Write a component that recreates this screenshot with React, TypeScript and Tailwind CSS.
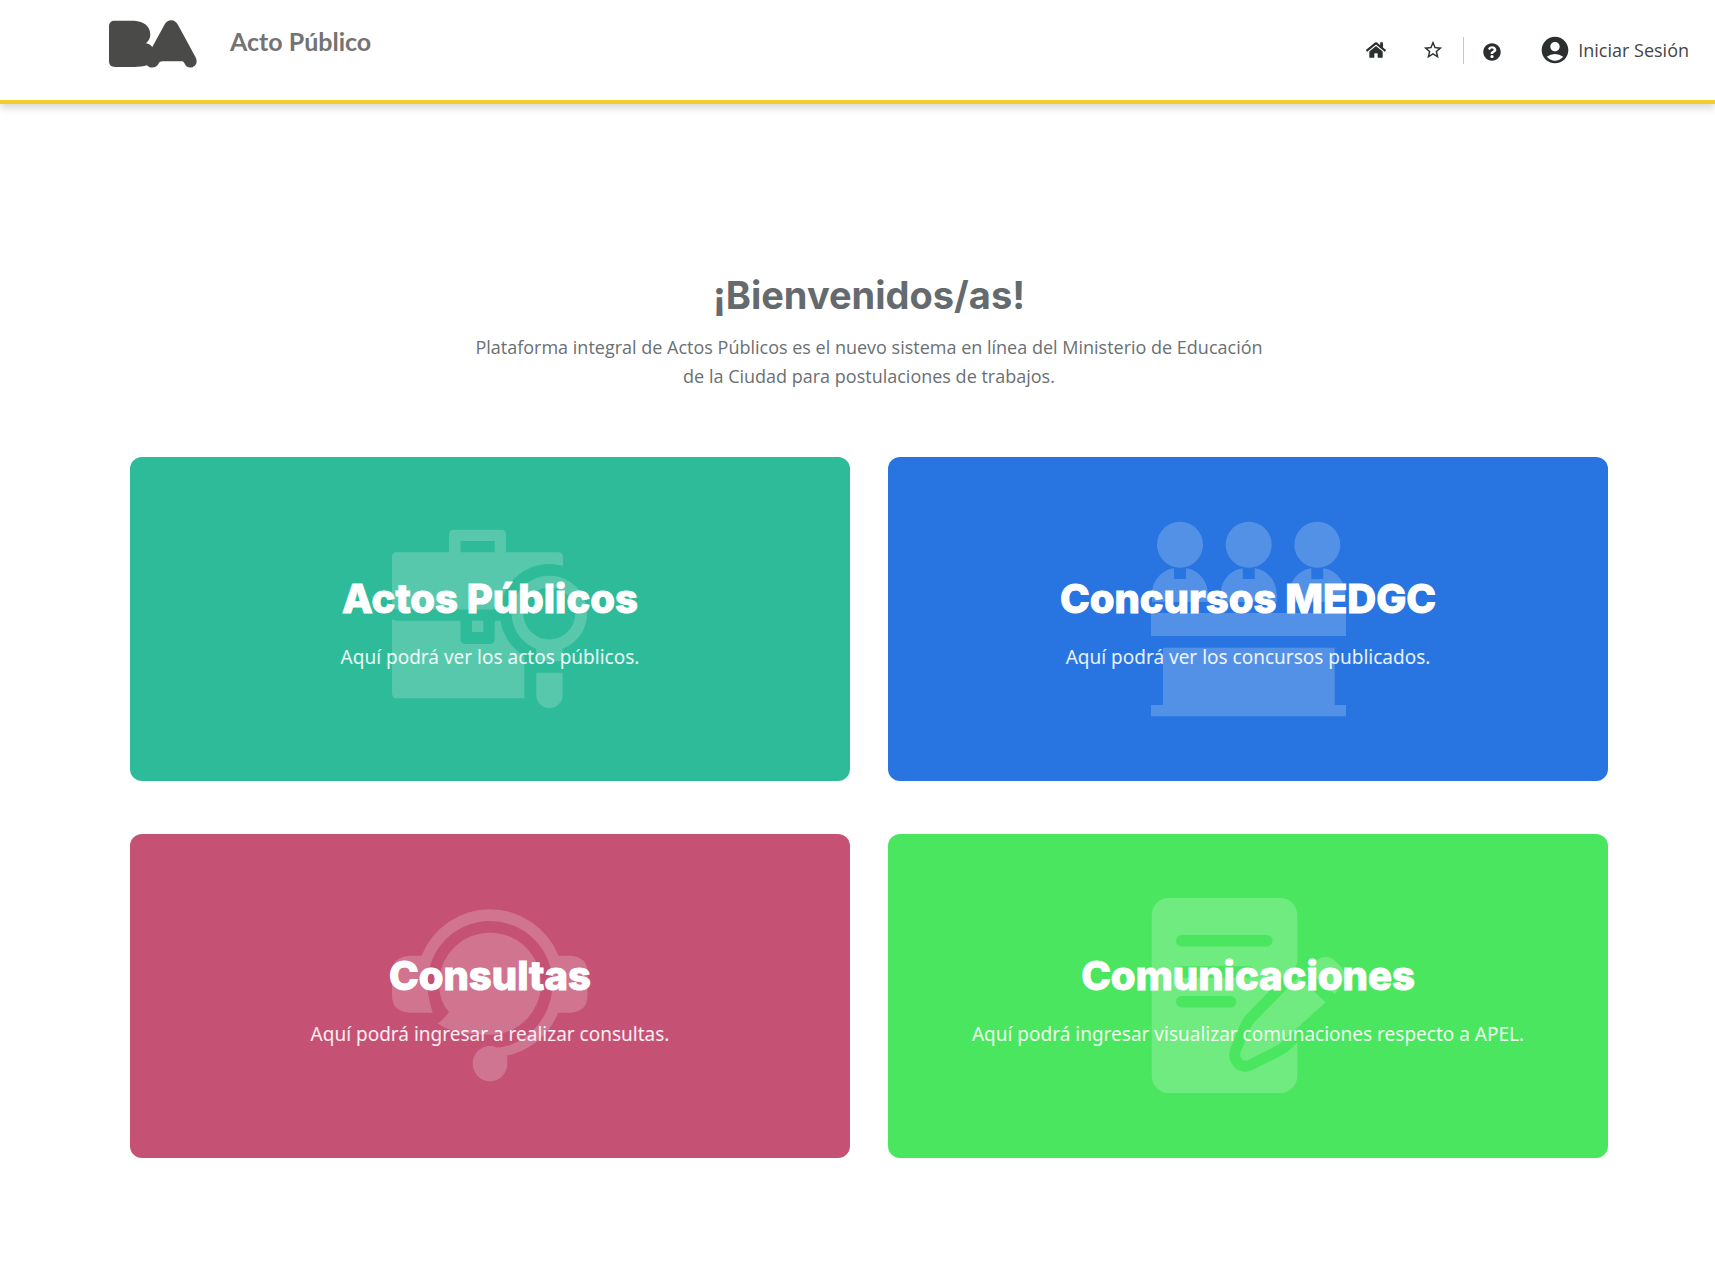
import type { ReactNode } from 'react';
import { FaHome, FaQuestionCircle } from 'react-icons/fa';
import { MdAccountCircle, MdStarBorder } from 'react-icons/md';

function Logo() {
  return (
    <svg viewBox="0 0 88 48" className="h-12 w-22 fill-[#4a4a48]" role="img" aria-label="Buenos Aires">
      <path d="M6 .8H25C35 1.2 41.300 6.500 41.300 14.700C41.300 18 39.500 21 37 23.200C39.700 23.800 42 25 43.300 27L55.200 5.200C58.200-1.200 66-1.300 69.200 5.200L86.700 37.500C89.600 43.500 85.200 47.600 81.300 47.600C78.500 47.600 76.700 46 75.600 43.500C74.800 41.800 74 41.200 72.500 41.200H53.500C51.500 41.200 50.500 42 49.600 43.500C48.300 46.300 46.200 47.600 43.300 47.600C41 47.600 39.300 46.800 38 45.200C34.500 46.300 30 46.900 25 46.900H6C2 46.900 0 45 0 41V6.500C0 2.700 2 .8 6 .8Z" />
    </svg>
  );
}

function BriefcaseSearch() {
  return (
    <>
      <mask id="lens-cut">
        <rect width="200" height="200" fill="white" />
        <g fill="black">
          <circle cx="159.300" cy="94.400" r="49.400" />
          <rect x="134.300" y="110" width="66" height="90" />
        </g>
      </mask>
      <g mask="url(#lens-cut)">
        <path fillRule="evenodd" d="M59 33.300V15.700Q59 10.700 64 10.700H111Q116 10.700 116 15.700V33.300H168Q173 33.300 173 38.300V90.500H7Q2 90.500 2 85.500V38.300Q2 33.300 7 33.300ZM70.500 22V33.300H104.700V22Z" />
        <path d="M2 100.500L7 101.700H70.500V120Q70.500 125 75.500 125H99.700Q104.700 125 104.700 120V101.700H200V179.300H7Q2 179.300 2 174.300Z" />
        <rect x="82" y="101.700" width="11.300" height="11.300" />
      </g>
      <path fillRule="evenodd" d="M146.300 129.700A37.700 37.700 0 1 1 172.600 129.700V142.300H146.300ZM159.300 68.400A26 26 0 1 0 159.300 120.400A26 26 0 1 0 159.300 68.400Z" />
      <path d="M146.300 153.700H172.600V176A13.150 13.150 0 0 1 146.300 176Z" />
    </>
  );
}

function JuryPanel() {
  return (
    <>
      {[32, 100.7, 169.3].map((x) => (
        <g key={x} transform={`translate(${x} 0)`}>
          <circle cy="25.700" r="23" />
          <path d="M-6 49.200V60H6V49.200C18 51 28 61 28 76V83H-28V76C-28 61-18 51-6 49.200Z" />
        </g>
      ))}
      <path d="M3 94H198V117H3ZM15 128.700H186.700V186H198V197.300H3V186H15Z" />
    </>
  );
}

function Headset() {
  return (
    <>
      <path d="M31.500 59.700H20Q2 60.700 2 77V99.500Q2 115.700 20 116.700H42.700L40 107Q37.500 98 37.500 87.500A62.500 62.500 0 0 1 162.500 87.500C162.500 122 136 150 107 151.500A17.300 17.300 0 0 0 82.700 168A17.300 17.300 0 0 0 117.300 168Q117.500 162 117 159.500C139 155.500 160 138 168.200 116.700H180Q197.500 115.700 197.500 99.500V77Q197.500 60.700 180 59.700H168.500A73.800 73.800 0 0 0 31.500 59.700Z" />
      <path d="M100 36.700A51 51 0 0 1 100 138.700C80 138.700 62 137 47.500 127.500Q53 124.500 59 116C52 108 49 98 49 87.700A51 51 0 0 1 100 36.700Z" />
    </>
  );
}

const pencilBody = 'M150.500 81L177.700 106.300L132 147.500Q131 148.500 129 149.500L100 164Q96 166 93.500 162.500Q91.500 160 92.500 156.500L103 131Q104 128.500 107 125.500Z';
const pencilEnd = 'M158.500 73L169 64Q178 57.500 186 64L192 69.500Q200 79 193 90L186.500 98Z';

function NoteEdit() {
  return (
    <>
      <mask id="note-cut">
        <rect width="200" height="200" fill="white" />
        <g fill="black" stroke="none">
          <rect x="28" y="39" width="96.600" height="11.400" rx="5.700" />
          <rect x="28" y="70.300" width="78.500" height="11.400" rx="5.700" />
          <rect x="28" y="100" width="60.300" height="11.400" rx="5.700" />
        </g>
        <g fill="black" stroke="black" strokeWidth="22" strokeLinejoin="round">
          <path d={pencilBody} />
          <path d={pencilEnd} />
        </g>
      </mask>
      <rect x="3.700" y="2" width="145.600" height="195" rx="17" mask="url(#note-cut)" />
      <path d={pencilBody} />
      <path d={pencilEnd} />
    </>
  );
}

function Card({ title, text, color, art }: { title: string; text: string; color: string; art: ReactNode }) {
  return (
    <a href="#" className={`relative flex min-h-[324px] flex-col items-center justify-center gap-5 overflow-hidden rounded-xl px-6 pt-2 text-center text-white ${color}`}>
      <svg viewBox="0 0 200 200" aria-hidden="true" className="absolute top-1/2 left-1/2 size-[200px] -translate-x-1/2 -translate-y-1/2 fill-white opacity-20">
        {art}
      </svg>
      <h2 className="relative font-['Inter',sans-serif] text-[40px] leading-[48px] font-extrabold [-webkit-text-stroke:1px_white]">{title}</h2>
      <p className="relative font-['Noto_Sans','Open_Sans',sans-serif] text-[19px] leading-7 text-white/90">{text}</p>
    </a>
  );
}

export default function App() {
  return (
    <div className="min-h-screen bg-white font-['Open_Sans',sans-serif]">
      <header className="flex h-[104px] items-start justify-between border-b-4 border-[#f0cc2c] pr-[26px] pl-[109px] shadow-[0_4px_8px_rgba(0,0,0,0.16)]">
        <a href="#" className="flex items-start gap-[33px] pt-5">
          <Logo />
          <span className="font-['Lato',sans-serif] text-[25px] leading-[42px] font-bold text-[#737373]">Acto Público</span>
        </a>
        <nav className="flex items-center pt-[34px] text-[#2b2f30]">
          <a href="#" aria-label="Inicio"><FaHome size={20} /></a>
          <a href="#" aria-label="Favoritos" className="ml-9"><MdStarBorder size={22} /></a>
          <span className="ml-[19px] h-[27px] w-px bg-[#c8c8c8]" />
          <a href="#" aria-label="Ayuda" className="ml-[19px] pt-[3px]"><FaQuestionCircle size={18} /></a>
          <a href="#" className="ml-[38px] flex items-center gap-[7px]">
            <MdAccountCircle size={32} />
            <span className="text-lg leading-8 text-[#444]">Iniciar Sesión</span>
          </a>
        </nav>
      </header>

      <main className="pt-[167px] pr-[107px] pb-16 pl-[130px]">
        <h1 className="text-center font-['Inter',sans-serif] text-[38px] leading-[48px] font-bold text-[#646a6d]">¡Bienvenidos/as!</h1>
        <p className="mx-auto mt-3.5 max-w-[804px] text-center text-lg leading-[29px] text-[#6a7073]">
          Plataforma integral de Actos Públicos es el nuevo sistema en línea del Ministerio de Educación de la Ciudad para postulaciones de trabajos.
        </p>
        <div className="mt-[66px] grid grid-cols-2 gap-x-[38px] gap-y-[53px]">
          <Card title="Actos Públicos" text="Aquí podrá ver los actos públicos." color="bg-[#2ebb99]" art={<BriefcaseSearch />} />
          <Card title="Concursos MEDGC" text="Aquí podrá ver los concursos publicados." color="bg-[#2875e2]" art={<JuryPanel />} />
          <Card title="Consultas" text="Aquí podrá ingresar a realizar consultas." color="bg-[#c55275]" art={<Headset />} />
          <Card title="Comunicaciones" text="Aquí podrá ingresar visualizar comunaciones respecto a APEL." color="bg-[#4be65f]" art={<NoteEdit />} />
        </div>
      </main>
    </div>
  );
}
